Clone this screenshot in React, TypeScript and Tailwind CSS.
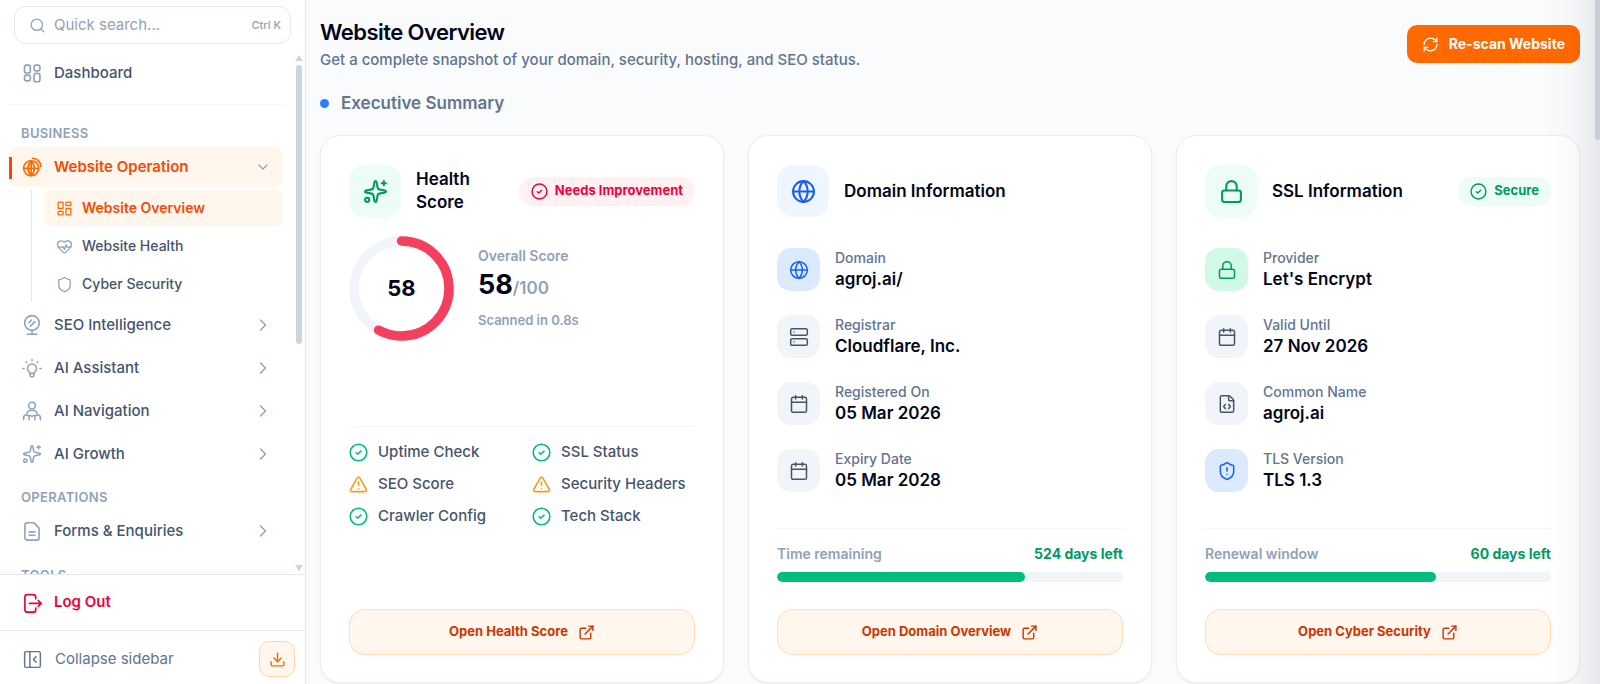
import type { ReactNode } from "react";
import {
  Calendar,
  ChevronDown,
  ChevronRight,
  Download,
  ExternalLink,
  FileCode,
  Globe,
  HeartPulse,
  LayoutDashboard,
  Lock,
  PanelLeftClose,
  RefreshCw,
  Search,
  Server,
  Shield,
  ShieldAlert,
  Sparkles,
  TriangleAlert,
} from "lucide-react";

function Glyph({ className, width = 1.5, children }: { className?: string; width?: number; children: ReactNode }) {
  return (
    <svg
      viewBox="0 0 24 24"
      fill="none"
      stroke="currentColor"
      strokeWidth={width}
      strokeLinecap="round"
      strokeLinejoin="round"
      aria-hidden="true"
      className={className}
    >
      {children}
    </svg>
  );
}

const TilesIcon = () => (
  <Glyph className="size-5" width={2}>
    <rect x="3" y="2.5" width="7" height="9.500" rx="2.5" />
    <rect x="14.5" y="2.5" width="7" height="7" rx="2.5" />
    <rect x="3" y="14.500" width="7" height="7" rx="2.5" />
    <rect x="14.5" y="12.5" width="7" height="10" rx="2.5" />
  </Glyph>
);

const OrbitGlobeIcon = () => (
  <Glyph className="size-5" width={2}>
    <circle cx="11" cy="13.500" r="9" />
    <path d="M2 13.500h18M11 4.500c-5 5-5 13 0 18M11 4.500c5 5 5 13 0 18M11 4.500v18" />
    <path d="M12.500 1.500c5.500 0 10 4.500 10 10" />
  </Glyph>
);

const MirrorIcon = () => (
  <Glyph className="size-5" width={1.9}>
    <circle cx="12" cy="9.500" r="8.800" />
    <path d="M12 18.300V23M6 23h12M8.500 9l3-3M10 13.500l5.500-5.500" />
  </Glyph>
);

const BulbIcon = () => (
  <Glyph className="size-5" width={1.8}>
    <path d="M9.500 18.500v-1.200C7.700 16.300 6.500 14.700 6.500 12.700a5.500 5.500 0 0 1 11 0c0 2-1.200 3.600-3 4.600v1.200" />
    <path d="M9.500 18.500h5v2a2 2 0 0 1-2 2h-1a2 2 0 0 1-2-2z" />
    <path d="M12 1.800v1.400M4.800 4.800l.9.900M19.200 4.800l-.9.900M1 12.500h1.500M21.500 12.500h1.500" />
  </Glyph>
);

const PeopleIcon = () => (
  <Glyph className="size-5" width={1.8}>
    <circle cx="12" cy="5.500" r="4" />
    <path d="M5.500 15.500c.5-2.500 3-4.500 6.500-4.500s6 2 6.500 4.500" />
    <path d="M2 22.500v-2.500c0-2 1.300-3.200 3.200-3.200s3.300 1.200 3.300 3.200v2.500M22 22.500v-2.500c0-2-1.300-3.200-3.200-3.200s-3.300 1.200-3.300 3.200v2.500M8.500 17l3.500 1.500 3.500-1.500" />
  </Glyph>
);

const FormIcon = () => (
  <Glyph className="size-5" width={1.9}>
    <path d="M3.500 5a3 3 0 0 1 3-3h7.500l6.500 6.500V20a3 3 0 0 1-3 3h-11a3 3 0 0 1-3-3z" />
    <path d="M8.500 13h7M8.500 17h7" />
  </Glyph>
);

const ExitIcon = () => (
  <Glyph className="size-5" width={2}>
    <path d="M16.500 7V5a3 3 0 0 0-3-3H6.500a3 3 0 0 0-3 3v15a3 3 0 0 0 3 3h7a3 3 0 0 0 3-3v-2" />
    <path d="M9 12.500h14M19.500 9l3.500 3.500-3.500 3.500" />
  </Glyph>
);

const CheckBadgeIcon = ({ className }: { className: string }) => (
  <Glyph className={className} width={2}>
    <circle cx="12" cy="12" r="10.500" />
    <path d="m8.900 12.300 2.100 1.900 4.100-3.900" />
  </Glyph>
);

function NavRow({ icon, label }: { icon: ReactNode; label: string }) {
  return (
    <button type="button" className="flex h-10 w-full items-center gap-3 rounded-lg pl-[13px] pr-2.5 text-left text-[15px] font-medium text-slate-600">
      <span className="text-slate-400">{icon}</span>
      <span className="grow">{label}</span>
      <ChevronRight className="size-5 text-slate-400" strokeWidth={1.7} />
    </button>
  );
}

function GroupLabel({ children }: { children: ReactNode }) {
  return <h2 className="pl-3 text-[13px] leading-4 font-semibold tracking-wide text-slate-400">{children}</h2>;
}

function SubLink({ icon, label, active = false }: { icon: ReactNode; label: string; active?: boolean }) {
  return (
    <a
      href="#"
      aria-current={active ? "page" : undefined}
      className={
        active
          ? "flex h-9 items-center gap-[9px] rounded-lg bg-orange-50 pl-3 text-sm font-semibold text-orange-600"
          : "flex h-9 items-center gap-[9px] rounded-lg pl-3 text-sm font-medium text-slate-600"
      }
    >
      <span className={active ? "text-orange-500" : "text-slate-400"}>{icon}</span>
      {label}
    </a>
  );
}

function Sidebar() {
  return (
    <aside className="flex w-[306px] shrink-0 flex-col border-r border-slate-200 bg-white">
      <div className="px-3.5 pt-1.5">
        <label className="flex h-[38px] items-center gap-2 rounded-xl border border-slate-200 px-3.5 pr-[9px]">
          <Search className="size-[17px] shrink-0 text-slate-400" strokeWidth={1.8} />
          <input
            type="text"
            aria-label="Quick search"
            placeholder="Quick search..."
            className="w-full min-w-0 bg-transparent text-[15px] text-slate-700 outline-none placeholder:text-slate-400"
          />
          <kbd className="shrink-0 font-[Inter] text-[11px] font-medium text-slate-400">Ctrl K</kbd>
        </label>
      </div>

      <div className="relative mt-[9px] min-h-0 grow basis-0 overflow-hidden">
        <nav className="flex flex-col pl-[9px] pr-[22px]">
          <a href="#" className="flex h-10 items-center gap-3 pl-[13px] text-[15px] font-medium text-slate-600">
            <span className="text-slate-400">
              <TilesIcon />
            </span>
            Dashboard
          </a>
          <hr className="mt-[11px] mb-5 border-slate-100" />
          <GroupLabel>BUSINESS</GroupLabel>
          <button
            type="button"
            className="relative mt-1.5 flex h-10 w-full items-center gap-3 rounded-lg bg-orange-50 pl-[13px] pr-3 text-left text-[15px] font-semibold text-orange-600"
          >
            <span className="absolute top-2.5 left-0 h-[22px] w-[3px] bg-orange-600" />
            <span className="text-orange-500">
              <OrbitGlobeIcon />
            </span>
            <span className="grow">Website Operation</span>
            <ChevronDown className="size-4 text-slate-400" strokeWidth={1.8} />
          </button>
          <div className="mt-[3px] ml-[22px] flex flex-col gap-0.5 border-l border-slate-200 pl-3">
            <SubLink active icon={<LayoutDashboard className="size-[17px]" strokeWidth={1.8} />} label="Website Overview" />
            <SubLink icon={<HeartPulse className="size-[17px]" strokeWidth={1.8} />} label="Website Health" />
            <SubLink icon={<Shield className="size-[17px]" strokeWidth={1.8} />} label="Cyber Security" />
          </div>
          <div className="mt-[3px] flex flex-col gap-[3px]">
            <NavRow icon={<MirrorIcon />} label="SEO Intelligence" />
            <NavRow icon={<BulbIcon />} label="AI Assistant" />
            <NavRow icon={<PeopleIcon />} label="AI Navigation" />
            <NavRow icon={<Sparkles className="size-5" strokeWidth={1.8} />} label="AI Growth" />
          </div>
          <div className="mt-[15px] mb-1.5">
            <GroupLabel>OPERATIONS</GroupLabel>
          </div>
          <NavRow icon={<FormIcon />} label="Forms & Enquiries" />
          <div className="mt-4">
            <GroupLabel>TOOLS</GroupLabel>
          </div>
        </nav>
        <div aria-hidden="true" className="absolute inset-y-0 right-[3px] flex w-[7px] flex-col items-center">
          <span className="mt-0.5 size-0 border-x-[4px] border-b-[6px] border-x-transparent border-b-slate-300" />
          <span className="mt-1 h-[279px] w-1.5 rounded-full bg-slate-300" />
          <span className="mt-auto mb-[3px] size-0 border-x-[4px] border-t-[6px] border-x-transparent border-t-slate-300" />
        </div>
      </div>

      <div className="border-t border-slate-200 pl-[9px]">
        <button type="button" className="flex h-[55px] w-full items-center gap-3 pl-[13px] text-[15px] font-semibold text-rose-600">
          <ExitIcon />
          Log Out
        </button>
      </div>
      <div className="flex h-[54px] items-center justify-between border-t border-slate-200 pt-[3px] pr-2.5 pl-[22px]">
        <button type="button" className="flex items-center gap-3 text-[15px] text-slate-500">
          <PanelLeftClose className="size-[21px]" strokeWidth={1.7} />
          Collapse sidebar
        </button>
        <button
          type="button"
          aria-label="Download"
          className="flex size-9 items-center justify-center rounded-[10px] border border-orange-200 bg-orange-50 text-orange-500"
        >
          <Download className="size-[17px]" strokeWidth={2} />
        </button>
      </div>
    </aside>
  );
}

function Card({
  icon,
  title,
  badge,
  action,
  children,
}: {
  icon: ReactNode;
  title: string;
  badge?: ReactNode;
  action: string;
  children: ReactNode;
}) {
  return (
    <section className="flex min-w-0 flex-col rounded-[20px] border border-[#eaedf2] bg-white px-7 pt-[29px] pb-[27px] shadow-xs">
      <header className="flex items-center gap-[15px]">
        {icon}
        <h3 className="min-w-0 grow text-[17px] leading-[23px] font-semibold text-slate-950">{title}</h3>
        {badge}
      </header>
      {children}
      <button
        type="button"
        className="mt-[27px] flex h-[46px] shrink-0 items-center justify-center gap-2.5 rounded-2xl border border-orange-200/80 bg-orange-50 text-[13px] font-bold text-orange-700"
      >
        {action}
        <ExternalLink className="size-[17px]" strokeWidth={2} />
      </button>
    </section>
  );
}

function Fact({ icon, tone, label, value }: { icon: ReactNode; tone: string; label: string; value: string }) {
  return (
    <div className="flex items-center gap-[15px]">
      <span className={`flex size-[43px] shrink-0 items-center justify-center rounded-[14px] ${tone}`}>{icon}</span>
      <div className="flex flex-col">
        <dt className="text-sm leading-5 font-medium text-slate-500">{label}</dt>
        <dd className="text-[17px] leading-[23px] font-semibold text-slate-950">{value}</dd>
      </div>
    </div>
  );
}

function Remaining({ label, value, percent }: { label: string; value: string; percent: number }) {
  return (
    <div className="mt-auto border-t border-slate-100 pt-[15px]">
      <div className="flex justify-between text-sm leading-5">
        <span className="font-semibold text-slate-400">{label}</span>
        <span className="font-bold text-emerald-600">{value}</span>
      </div>
      <div className="mt-2 h-2.5 overflow-hidden rounded-full bg-slate-100">
        <div className="h-full rounded-full bg-emerald-500" style={{ width: `${percent}%` }} />
      </div>
    </div>
  );
}

function Check({ ok, label }: { ok: boolean; label: string }) {
  return (
    <li className="flex items-center gap-2.5">
      {ok ? (
        <CheckBadgeIcon className="size-[19px] shrink-0 text-emerald-500" />
      ) : (
        <TriangleAlert className="size-[19px] shrink-0 text-[#ff9a1f]" strokeWidth={2} />
      )}
      {label}
    </li>
  );
}

const slateTone = "bg-slate-100 text-slate-600";
const blueTone = "bg-blue-100 text-blue-600";
const greenTone = "bg-emerald-100 text-emerald-600";
const headIcon = "flex size-[52px] shrink-0 items-center justify-center rounded-2xl";
const pill = "flex h-[29px] shrink-0 items-center gap-[7px] rounded-full px-3 text-[13px] font-bold";

export default function App() {
  const score = 58;
  return (
    <div className="relative flex h-screen overflow-hidden bg-[#fafbfd] font-[Inter,sans-serif]">
      <Sidebar />
      <main className="min-w-0 grow overflow-hidden pr-5 pl-3.5">
        <div className="flex items-start justify-between pt-[18px]">
          <div>
            <h1 className="text-[22px] leading-7 font-semibold tracking-tight text-slate-950">Website Overview</h1>
            <p className="text-[15px] leading-[27px] font-medium text-slate-500">
              Get a complete snapshot of your domain, security, hosting, and SEO status.
            </p>
          </div>
          <button
            type="button"
            className="mt-[7px] flex h-[38px] items-center gap-2.5 rounded-[10px] bg-orange-500 px-[15px] text-sm font-bold text-white"
          >
            <RefreshCw className="size-[17px]" strokeWidth={1.8} />
            Re-scan Website
          </button>
        </div>

        <div className="mt-[18px] flex items-center gap-3">
          <span className="size-[9px] rounded-full bg-blue-500" />
          <h2 className="text-[17px] leading-6 font-semibold text-slate-500">Executive Summary</h2>
        </div>

        <div className="mt-5 grid h-[548px] grid-cols-3 gap-6">
          <Card
            title="Health Score"
            icon={
              <span className={`${headIcon} bg-emerald-50 text-emerald-600`}>
                <Sparkles className="size-[25px]" strokeWidth={2} />
              </span>
            }
            badge={
              <span className={`${pill} bg-rose-50 text-rose-600`}>
                <CheckBadgeIcon className="size-[17px]" />
                Needs Improvement
              </span>
            }
            action="Open Health Score"
          >
            <div className="mt-[19px] flex items-center gap-6">
              <div className="relative flex size-[105px] items-center justify-center">
                <svg viewBox="0 0 105 105" fill="none" aria-hidden="true" className="absolute inset-0 -rotate-90">
                  <circle cx="52.5" cy="52.5" r="47.5" className="stroke-slate-100" strokeWidth="9.5" />
                  <circle
                    cx="52.5"
                    cy="52.5"
                    r="47.5"
                    stroke="#f43f5e"
                    strokeWidth="9.5"
                    strokeLinecap="round"
                    pathLength="100"
                    strokeDasharray={`${score} 100`}
                  />
                </svg>
                <span className="text-[22px] font-bold text-slate-950">{score}</span>
              </div>
              <div className="pb-0.5">
                <p className="text-sm leading-5 font-semibold text-slate-400">Overall Score</p>
                <p className="mt-[3px] text-[27px] leading-8 font-bold text-slate-950">
                  {score}
                  <span className="text-[17px] font-semibold text-slate-400">/100</span>
                </p>
                <p className="mt-1.5 text-[13px] leading-5 font-semibold text-slate-400">Scanned in 0.8s</p>
              </div>
            </div>
            <ul className="mt-[85px] grid grid-cols-2 gap-x-5 gap-y-2 border-t border-slate-100 pt-[13px] text-[15px] leading-6 font-medium text-slate-600">
              <Check ok label="Uptime Check" />
              <Check ok label="SSL Status" />
              <Check ok={false} label="SEO Score" />
              <Check ok={false} label="Security Headers" />
              <Check ok label="Crawler Config" />
              <Check ok label="Tech Stack" />
            </ul>
            <div className="grow" />
          </Card>

          <Card
            title="Domain Information"
            icon={
              <span className={`${headIcon} bg-blue-50 text-blue-600`}>
                <Globe className="size-[25px]" strokeWidth={2} />
              </span>
            }
            action="Open Domain Overview"
          >
            <dl className="mt-[31px] flex flex-col gap-6">
              <Fact tone={blueTone} icon={<Globe className="size-5" strokeWidth={1.8} />} label="Domain" value="agroj.ai/" />
              <Fact tone={slateTone} icon={<Server className="size-5" strokeWidth={1.8} />} label="Registrar" value="Cloudflare, Inc." />
              <Fact tone={slateTone} icon={<Calendar className="size-5" strokeWidth={1.8} />} label="Registered On" value="05 Mar 2026" />
              <Fact tone={slateTone} icon={<Calendar className="size-5" strokeWidth={1.8} />} label="Expiry Date" value="05 Mar 2028" />
            </dl>
            <Remaining label="Time remaining" value="524 days left" percent={71.7} />
          </Card>

          <Card
            title="SSL Information"
            icon={
              <span className={`${headIcon} bg-emerald-50 text-emerald-600`}>
                <Lock className="size-[25px]" strokeWidth={2} />
              </span>
            }
            badge={
              <span className={`${pill} bg-emerald-50 text-emerald-600`}>
                <CheckBadgeIcon className="size-[17px]" />
                Secure
              </span>
            }
            action="Open Cyber Security"
          >
            <dl className="mt-[31px] flex flex-col gap-6">
              <Fact tone={greenTone} icon={<Lock className="size-5" strokeWidth={1.8} />} label="Provider" value="Let's Encrypt" />
              <Fact tone={slateTone} icon={<Calendar className="size-5" strokeWidth={1.8} />} label="Valid Until" value="27 Nov 2026" />
              <Fact tone={slateTone} icon={<FileCode className="size-5" strokeWidth={1.8} />} label="Common Name" value="agroj.ai" />
              <Fact tone={blueTone} icon={<ShieldAlert className="size-5" strokeWidth={1.8} />} label="TLS Version" value="TLS 1.3" />
            </dl>
            <Remaining label="Renewal window" value="60 days left" percent={66.7} />
          </Card>
        </div>
      </main>
      <div
        aria-hidden="true"
        className="pointer-events-none absolute inset-y-0 right-0 w-14 bg-linear-to-r from-transparent via-gray-950/2 to-gray-950/8"
      />
      <div aria-hidden="true" className="absolute top-0 right-0 h-[140px] w-[5px] rounded-b-sm bg-[#c9ced8]" />
    </div>
  );
}
